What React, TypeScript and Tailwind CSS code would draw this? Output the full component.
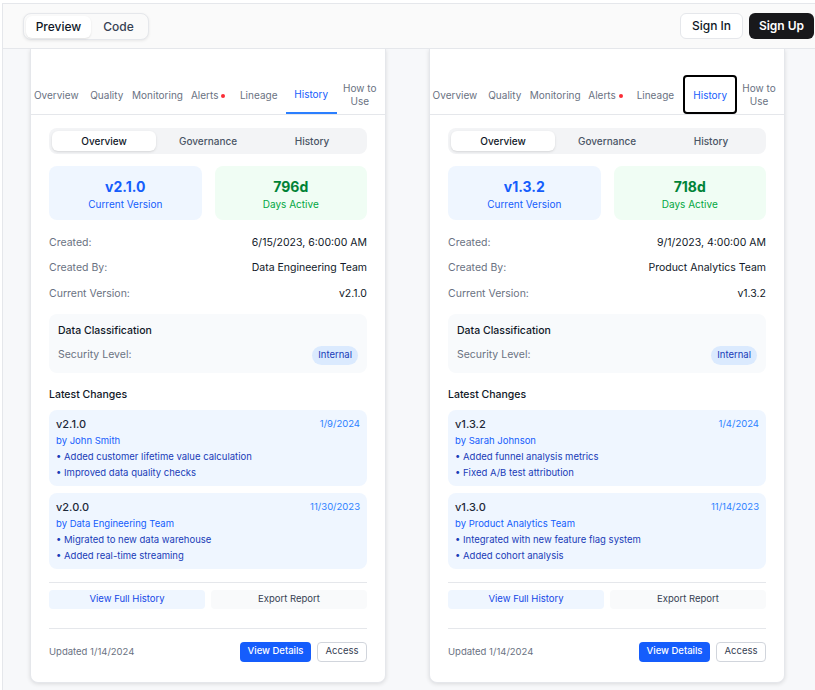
import React from "react";

type Change = { version: string; date: string; by: string; items: string[] };
type Asset = {
  version: string;
  days: string;
  created: string;
  createdBy: string;
  changes: Change[];
  updated: string;
  focusHistory?: boolean;
};

const assets: Asset[] = [
  {
    version: "v2.1.0",
    days: "796d",
    created: "6/15/2023, 6:00:00 AM",
    createdBy: "Data Engineering Team",
    updated: "1/14/2024",
    changes: [
      { version: "v2.1.0", date: "1/9/2024", by: "John Smith", items: ["Added customer lifetime value calculation", "Improved data quality checks"] },
      { version: "v2.0.0", date: "11/30/2023", by: "Data Engineering Team", items: ["Migrated to new data warehouse", "Added real-time streaming"] },
    ],
  },
  {
    version: "v1.3.2",
    days: "718d",
    created: "9/1/2023, 4:00:00 AM",
    createdBy: "Product Analytics Team",
    updated: "1/14/2024",
    focusHistory: true,
    changes: [
      { version: "v1.3.2", date: "1/4/2024", by: "Sarah Johnson", items: ["Added funnel analysis metrics", "Fixed A/B test attribution"] },
      { version: "v1.3.0", date: "11/14/2023", by: "Product Analytics Team", items: ["Integrated with new feature flag system", "Added cohort analysis"] },
    ],
  },
];

const tabs = ["Overview", "Quality", "Monitoring", "Alerts", "Lineage", "History", "How to Use"];

function AssetCard({ a }: { a: Asset }) {
  return (
    <div className="w-[356px] bg-white border border-t-0 border-gray-200 rounded-b-lg shadow-[0_1px_4px_rgba(0,0,0,0.12)]">
      <div className="h-[26px]" />
      <nav className="flex h-[40px] border-b border-gray-200">
        {tabs.map((t) => {
          const active = t === "History";
          return (
            <div
              key={t}
              className={`flex-1 flex items-center justify-center text-center text-[10px] leading-[13px] ${
                active
                  ? a.focusHistory
                    ? "text-blue-600 border-2 border-black rounded-[4px] ml-[3px] mr-[-3px]"
                    : "text-blue-600 border-b-2 border-blue-500 ml-[2px] mr-[-2px]"
                  : "text-gray-500"
              }`}
            >
              {t === "How to Use" ? (
                <span>How to<br />Use</span>
              ) : (
                <span className="flex items-center gap-[3px] pt-[2px]">
                  {t}
                  {t === "Alerts" && <span className="w-[4px] h-[4px] rounded-full bg-red-500" />}
                </span>
              )}
            </div>
          );
        })}
      </nav>

      <div className="px-[18px]">
        <div className="mt-[13px] grid grid-cols-3 bg-gray-100 rounded-lg p-[3px] h-[26px]">
          <div className="bg-white rounded-md shadow-sm flex items-center justify-center text-[10px] font-medium text-gray-900">Overview</div>
          <div className="flex items-center justify-center text-[10px] font-medium text-gray-600">Governance</div>
          <div className="flex items-center justify-center text-[10px] font-medium text-gray-600">History</div>
        </div>

        <div className="mt-3 grid grid-cols-2 gap-[13px]">
          <div className="h-[54px] rounded-lg bg-blue-50 flex flex-col items-center pt-[12px]">
            <div className="text-[14px] leading-[18px] font-bold text-blue-600">{a.version}</div>
            <div className="mt-[1px] text-[10px] leading-[14px] text-blue-600">Current Version</div>
          </div>
          <div className="h-[54px] rounded-lg bg-green-50 flex flex-col items-center pt-[12px]">
            <div className="text-[14px] leading-[18px] font-bold text-green-700">{a.days}</div>
            <div className="mt-[1px] text-[10px] leading-[14px] text-green-600">Days Active</div>
          </div>
        </div>

        <div className="mt-[10px] text-[10.5px]">
          {[
            ["Created:", a.created],
            ["Created By:", a.createdBy],
            ["Current Version:", a.version],
          ].map(([k, v]) => (
            <div key={k} className="h-[25.5px] flex items-center justify-between">
              <span className="text-gray-500">{k}</span>
              <span className="text-gray-900">{v}</span>
            </div>
          ))}
        </div>

        <div className="mt-[7px] bg-slate-50 rounded-lg px-[9px] pt-[10px] pb-[8px]">
          <div className="h-[14px] flex items-center pt-[1px] text-[10.5px] font-medium text-gray-900">Data Classification</div>
          <div className="mt-[8px] h-[19px] flex items-center justify-between text-[10.5px]">
            <span className="text-gray-500">Security Level:</span>
            <span className="h-[19px] px-[6px] rounded-full bg-blue-100 text-blue-800 text-[9.5px] flex items-center">Internal</span>
          </div>
        </div>

        <div className="mt-[15px] h-[14px] flex items-center pt-[1px] text-[10.5px] font-medium text-gray-900">Latest Changes</div>

        <div className="mt-[8px] flex flex-col gap-[7px]">
          {a.changes.map((c) => (
            <div key={c.version} className="bg-blue-50 rounded-lg px-[7px] pt-[7px] pb-[5px]">
              <div className="h-[14px] flex items-center justify-between pt-[1px]">
                <span className="text-[11px] font-medium text-gray-800">{c.version}</span>
                <span className="text-[9.5px] text-blue-500">{c.date}</span>
              </div>
              <div className="mt-[2px] text-[9.5px] leading-[16px] text-blue-600">by {c.by}</div>
              {c.items.map((it) => (
                <div key={it} className="text-[9.5px] leading-[16px] text-blue-800">• {it}</div>
              ))}
            </div>
          ))}
        </div>

        <div className="mt-[13px] border-t border-gray-200" />
        <div className="mt-[7px] grid grid-cols-2 gap-[6px]">
          <button className="h-[19px] pt-[1px] rounded bg-blue-50 text-blue-700 text-[9.5px]">View Full History</button>
          <button className="h-[19px] pt-[1px] rounded bg-gray-50 text-gray-700 text-[9.5px]">Export Report</button>
        </div>

        <div className="mt-[19px] border-t border-gray-200" />
        <div className="pt-[13px] pb-[20px] flex items-center justify-between">
          <span className="text-[9.5px] text-gray-500 pt-[1px]">Updated {a.updated}</span>
          <div className="flex gap-[6px]">
            <button className="h-[20px] w-[71px] rounded bg-blue-600 text-white text-[9.5px] font-medium">View Details</button>
            <button className="h-[20px] w-[50px] rounded border border-gray-300 bg-white text-gray-700 text-[9.5px]">Access</button>
          </div>
        </div>
      </div>
    </div>
  );
}

export default function App() {
  return (
    <div className="h-[690px] w-[815px] bg-white overflow-hidden" style={{ fontFamily: "Inter, 'Noto Sans', sans-serif" }}>
      <div className="mt-[3px] ml-[2px] h-[687px] border-l border-t border-gray-200 flex flex-col">
        <header className="h-[45px] shrink-0 bg-[#fafafa] border-b border-gray-200 flex items-start justify-between pl-[20px] pr-[1px] pt-[9px]">
          <div className="flex items-center h-[27px] p-[2px] rounded-lg border border-gray-200 bg-[#fafafa] shadow-[0_1px_3px_rgba(0,0,0,0.08)]">
            <div className="h-[22px] w-[65px] rounded-md bg-white shadow-[0_1px_2px_rgba(0,0,0,0.1)] flex items-center justify-center text-[12px] font-medium text-gray-900">Preview</div>
            <div className="h-[22px] w-[55px] flex items-center justify-center text-[12px] font-medium text-gray-700">Code</div>
          </div>
          <div className="flex items-center gap-[6px]">
            <button className="h-[26px] w-[63px] rounded-md border border-gray-200 bg-white text-[12px] font-medium text-gray-900">Sign In</button>
            <button className="h-[26px] w-[65px] rounded-md bg-[#18181b] text-[12px] font-semibold text-white">Sign Up</button>
          </div>
        </header>
        <main className="flex-1 bg-[#f7f8fa] overflow-hidden pl-[27px] flex items-start gap-[43px]">
          {assets.map((a) => (
            <AssetCard key={a.version} a={a} />
          ))}
        </main>
      </div>
    </div>
  );
}
